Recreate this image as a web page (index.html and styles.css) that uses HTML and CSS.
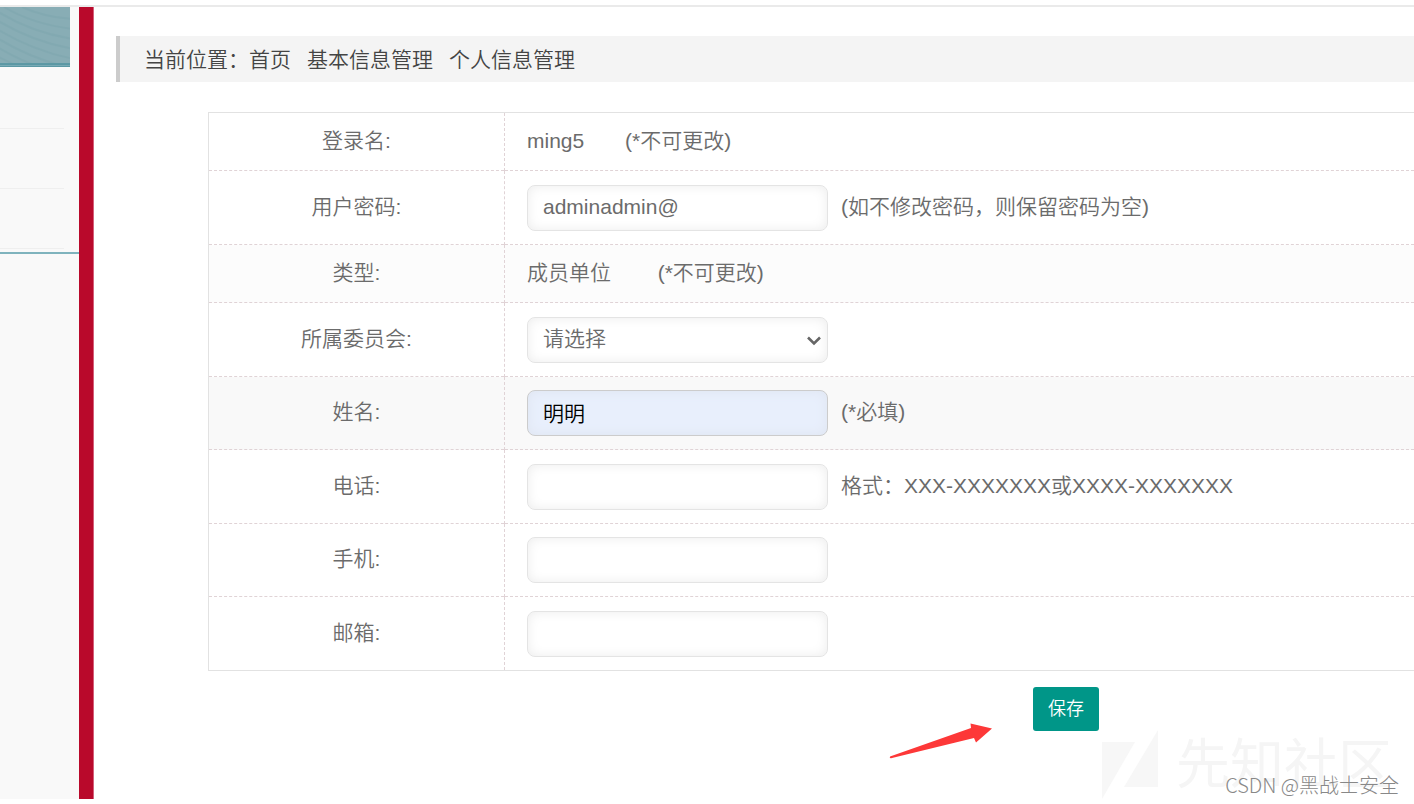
FILE: index.html
```html
<!DOCTYPE html>
<html lang="zh-CN">
<head>
<meta charset="utf-8">
<title>个人信息管理</title>
<link rel="stylesheet" href="styles.css">
</head>
<body>
<div class="shell">
  <aside class="sidebar">
    <svg class="side-banner" viewBox="0 0 70 61" preserveAspectRatio="none" aria-hidden="true">
      <rect width="70" height="61" fill="#88adb5"/>
      <g fill="none" stroke="#7fa6af" stroke-width="2" opacity=".6">
        <path d="M22 0Q44 10 70 12M4 0Q32 17 70 22M-8 1Q28 25 70 32M-10 9Q28 34 70 42M-10 18Q28 43 70 52M-10 27Q28 52 70 62M-10 36Q20 56 55 66M-10 46Q10 58 35 66"/>
      </g>
      <rect y="57" width="70" height="4" fill="#5b98a4"/>
      <path d="M0 59.5H70" stroke="#7aabb5"/>
    </svg>
    <ul class="side-menu">
      <li></li>
      <li></li>
      <li></li>
    </ul>
  </aside>
  <div class="divider"></div>
  <main class="main">
    <nav class="crumbs" aria-label="当前位置">
      <span>当前位置：<a href="#">首页</a></span>
      <a href="#">基本信息管理</a>
      <a href="#">个人信息管理</a>
    </nav>
    <form class="profile">
      <table class="fields">
        <tbody>
          <tr class="text-row">
            <th scope="row">登录名:</th>
            <td>ming5&nbsp;&nbsp;&nbsp;&nbsp;&nbsp;&nbsp;&nbsp;(*不可更改)</td>
          </tr>
          <tr>
            <th scope="row"><label for="password">用户密码:</label></th>
            <td><div class="entry"><input class="control" id="password" type="text" value="adminadmin@"><span class="hint">(如不修改密码，则保留密码为空)</span></div></td>
          </tr>
          <tr class="text-row tint-light">
            <th scope="row">类型:</th>
            <td>成员单位&nbsp;&nbsp;&nbsp;&nbsp;&nbsp;&nbsp;&nbsp;&nbsp;(*不可更改)</td>
          </tr>
          <tr>
            <th scope="row"><label for="committee">所属委员会:</label></th>
            <td>
              <div class="entry">
                <div class="picker">
                  <select class="control" id="committee"><option>请选择</option></select>
                  <svg class="chevron" viewBox="0 0 16 10" aria-hidden="true"><path d="M2 1.500L8 7.500L14 1.500" fill="none" stroke="#666" stroke-width="2.600"/></svg>
                </div>
              </div>
            </td>
          </tr>
          <tr class="tint">
            <th scope="row"><label for="name">姓名:</label></th>
            <td><div class="entry"><input class="control filled" id="name" type="text" value="明明"><span class="hint">(*必填)</span></div></td>
          </tr>
          <tr>
            <th scope="row"><label for="phone">电话:</label></th>
            <td><div class="entry"><input class="control" id="phone" type="text"><span class="hint">格式：XXX-XXXXXXX或XXXX-XXXXXXX</span></div></td>
          </tr>
          <tr>
            <th scope="row"><label for="mobile">手机:</label></th>
            <td><div class="entry"><input class="control" id="mobile" type="text"></div></td>
          </tr>
          <tr>
            <th scope="row"><label for="email">邮箱:</label></th>
            <td><div class="entry"><input class="control" id="email" type="text"></div></td>
          </tr>
        </tbody>
      </table>
      <div class="actions"><button class="save" type="button">保存</button></div>
    </form>
  </main>
</div>
<svg class="arrow" viewBox="0 0 104 36" aria-hidden="true">
  <path d="M1 33.500L82 5L81.500 0.500L103 5.500L87 19.500L85 15L3 35Q0 36 1 33.500Z" fill="#fd3838"/>
</svg>
<div class="community">
  <svg class="community-logo" viewBox="0 0 56 70" aria-hidden="true">
    <path d="M0 12H33L0 69ZM56 0V57H22Z" fill="#f7f7f7"/>
  </svg>
  <span>先知社区</span>
</div>
<div class="credit">CSDN @黑战士安全</div>
</body>
</html>
```
FILE: styles.css
```css
* {
  box-sizing: border-box;
}

body {
  margin: 0;
  min-height: 100vh;
  padding: 5px 0;
  display: flex;
  flex-direction: column;
  position: relative;
  overflow: hidden;
  background: #fff;
  color: #6b6b6b;
  font: 350 21px/30px "Liberation Sans", "Noto Sans CJK SC", sans-serif;
}

.shell {
  flex: 1;
  display: flex;
  border-top: 2px solid #eaeaea;
}

.sidebar {
  flex: 0 0 79px;
  background: #f9f9f9;
}

.side-banner {
  display: block;
  width: 70px;
  height: 60px;
}

.side-menu {
  margin: 0;
  padding: 2px 15px 3px 0;
  list-style: none;
  border-bottom: 2px solid #7fb3bd;
}

.side-menu li {
  height: 60px;
  border-bottom: 1px solid #efefef;
}

.divider {
  flex: 0 0 15px;
  background: #b9092b;
  border-right: 1px solid #d4607a;
}

.main {
  flex: 1;
  min-width: 0;
  padding: 29px 0 0 22px;
}

.crumbs {
  display: flex;
  gap: 16px;
  padding: 9px 24px 7px;
  border-left: 4px solid #ccc;
  background: #f4f4f4;
  color: #444;
}

.crumbs a {
  color: inherit;
  text-decoration: none;
}

.profile {
  margin: 30px 0 0 92px;
}

.fields {
  width: 100%;
  border-collapse: collapse;
  border: 1px solid #e2e2e2;
  border-right: 0;
}

.fields tr {
  height: 74px;
}

.fields tr:nth-child(odd) {
  height: 73px;
}

.fields .text-row:nth-child(odd) {
  height: 58px;
}

.fields tr + tr {
  border-top: 1px dashed #e0d3d6;
}

.fields th {
  width: 296px;
  padding: 0 0 2px;
  border-right: 1px dashed #e0d3d6;
  font-weight: 350;
}

.fields td {
  padding: 0 0 0 22px;
}

.fields .text-row td {
  padding-bottom: 2px;
}

.tint-light {
  background: #fcfcfc;
}

.tint {
  background: #f9f9f9;
}

.entry {
  display: flex;
  align-items: center;
  gap: 13px;
}

.hint {
  padding-bottom: 2px;
}

.control {
  width: 301px;
  height: 46px;
  padding: 0 15px 2px;
  border: 1px solid #e4e4e4;
  border-radius: 8px;
  background-color: #fff;
  box-shadow: inset 0 0 12px #ececec;
  color: #6b6b6b;
  font: inherit;
}

.picker {
  position: relative;
}

.picker .control {
  display: block;
  appearance: none;
}

.chevron {
  position: absolute;
  right: 6px;
  top: 19px;
  width: 16px;
  height: 10px;
  pointer-events: none;
}

.filled {
  border-color: #ccc;
  background-color: #e8effc;
  box-shadow: inset 0 0 12px #dfe5f0;
  color: #000;
}

.actions {
  display: flex;
  justify-content: center;
  padding: 16px 0 0 510px;
}

.save {
  width: 66px;
  height: 44px;
  padding: 0;
  border: 0;
  border-radius: 3px;
  background: #009688;
  color: #fff;
  font: inherit;
  font-size: 18px;
}

.arrow {
  position: absolute;
  left: 889px;
  bottom: 45px;
  width: 104px;
  height: 36px;
}

.community {
  position: absolute;
  right: 22px;
  bottom: 4px;
  display: flex;
  align-items: center;
  gap: 18px;
  color: #f5f5f5;
  font-size: 54px;
  font-weight: 400;
  line-height: 70px;
}

.community-logo {
  width: 56px;
  height: 70px;
}

.credit {
  position: absolute;
  right: 15px;
  bottom: 4px;
  color: #888;
  font: 300 20px/30px "Noto Sans CJK SC", sans-serif;
}
```
